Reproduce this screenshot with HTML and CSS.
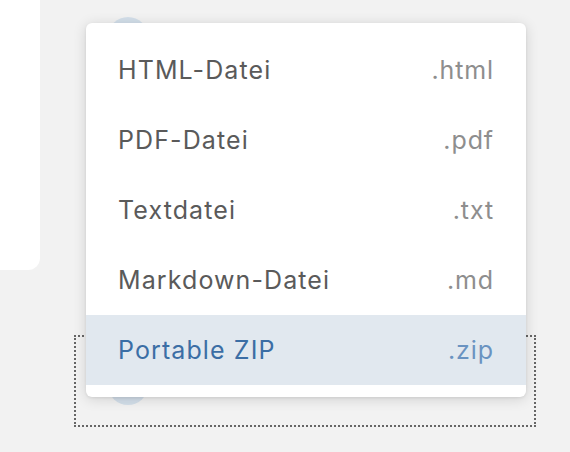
FILE: index.html
```html
<!DOCTYPE html>
<html lang="de">
<head>
<meta charset="utf-8">
<link rel="stylesheet" href="styles.css">
</head>
<body>
<div class="page">
  <aside class="side-card"></aside>
  <main class="main">
    <div class="avatar avatar-top"></div>
    <div class="focus-box">
      <div class="avatar"></div>
    </div>
  </main>
  <ul class="menu">
    <li class="menu-item"><span class="label">HTML-Datei</span><span class="ext">.html</span></li>
    <li class="menu-item"><span class="label">PDF-Datei</span><span class="ext">.pdf</span></li>
    <li class="menu-item"><span class="label">Textdatei</span><span class="ext">.txt</span></li>
    <li class="menu-item"><span class="label">Markdown-Datei</span><span class="ext">.md</span></li>
    <li class="menu-item active"><span class="label">Portable ZIP</span><span class="ext">.zip</span></li>
  </ul>
</div>
</body>
</html>
```

FILE: styles.css
```css
html, body {
  margin: 0;
  padding: 0;
  background: #f2f2f2;
  width: 570px;
  height: 452px;
  overflow: hidden;
  font-family: "Inter", "Noto Sans", sans-serif;
}

.page {
  position: relative;
  display: flex;
  align-items: flex-start;
  width: 570px;
  height: 452px;
}

.side-card {
  width: 40px;
  height: 270px;
  background: #ffffff;
  border-bottom-right-radius: 12px;
  flex: none;
}

.main {
  display: flex;
  flex-direction: column;
  margin-left: 34px;
  padding-top: 17px;
}

.avatar {
  width: 40px;
  height: 40px;
  border-radius: 50%;
  background: #d3dfea;
}

.avatar-top {
  margin-left: 34px;
}

.focus-box {
  margin-top: 278px;
  width: 426px;
  height: 88px;
  border: 2px dotted #666666;
  display: flex;
  align-items: flex-end;
  padding-left: 32px;
  box-sizing: content-box;
}

.focus-box .avatar {
  margin-bottom: 20px;
}

.menu {
  position: absolute;
  left: 86px;
  top: 23px;
  width: 440px;
  margin: 0;
  padding: 12px 0;
  list-style: none;
  background: #ffffff;
  border-radius: 6px;
  box-shadow: 0 2px 14px rgba(0, 0, 0, 0.14), 0 1px 3px rgba(0, 0, 0, 0.08);
}

.menu-item {
  display: flex;
  justify-content: space-between;
  align-items: center;
  height: 70px;
  padding: 0 32px;
  font-size: 25px;
  font-weight: 400;
  letter-spacing: 1.1px;
}

.label {
  color: #5a5a5a;
}

.ext {
  color: #8e8e8e;
  letter-spacing: 0.9px;
}

.menu-item.active {
  background: #e1e8ef;
}

.menu-item.active .label {
  color: #3b6ea5;
}

.menu-item.active .ext {
  color: #6a93c1;
}
```
